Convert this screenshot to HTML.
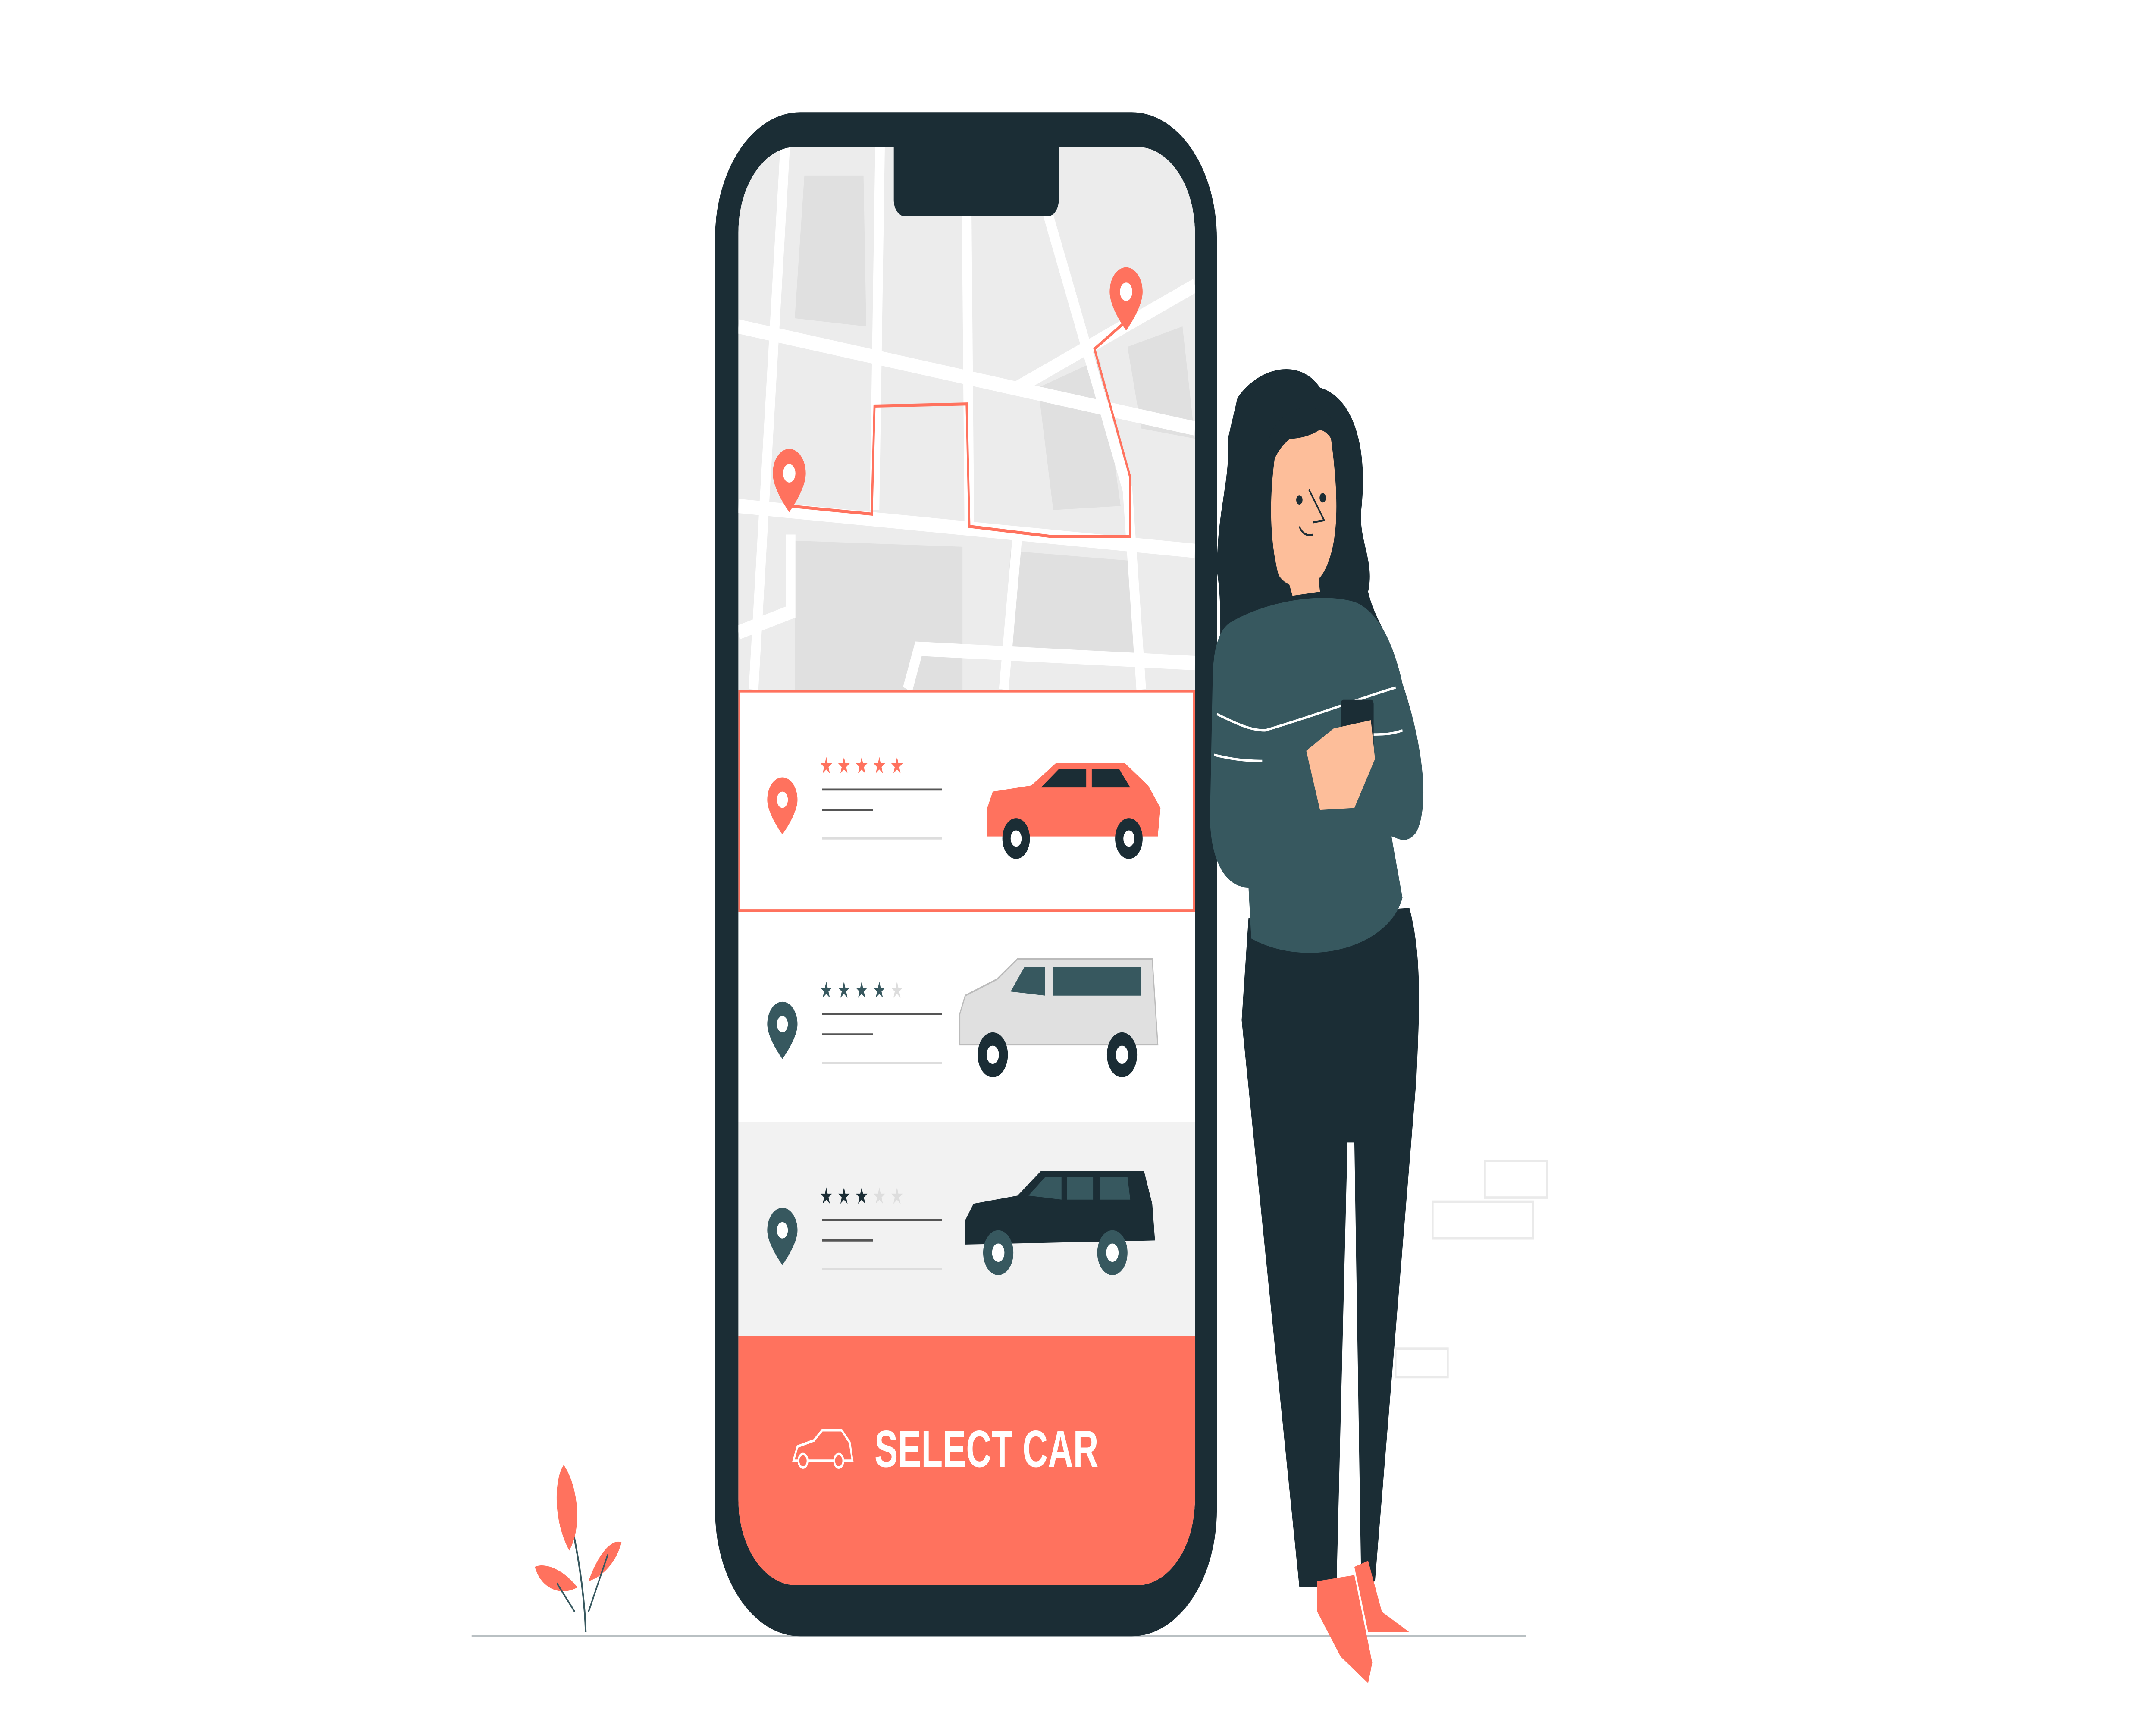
<!DOCTYPE html>
<html><head><meta charset="utf-8"><style>
html,body{margin:0;padding:0;background:#fff;width:100%;height:100%;overflow:hidden;}
svg{display:block;width:100vw;height:100vh;}
</style></head><body>
<svg viewBox="0 0 1568 845.5" preserveAspectRatio="none" xmlns="http://www.w3.org/2000/svg">
<rect width="1568" height="845.5" fill="#fff"/>
<line x1="343" y1="802" x2="1110" y2="802" stroke="#b9c0c3" stroke-width="1.2"/>
<g fill="none" stroke="#eaeaea" stroke-width="1.2">
<rect x="1080" y="569" width="45" height="18"/><rect x="1042" y="589" width="73" height="18"/><rect x="1015" y="661" width="38" height="14"/>
</g>
<g>
<path d="M426 800 C425 780 420 760 414 742" stroke="#37585f" stroke-width="1.2" fill="none"/>
<path d="M414 760 C402 745 403 725 410 718 C420 728 424 748 414 760Z" fill="#ff725e"/>
<path d="M420 778 C408 768 395 766 389 768 C393 778 407 783 420 778Z" fill="#ff725e"/>
<path d="M428 775 C436 760 446 754 452 756 C448 766 438 773 428 775Z" fill="#ff725e"/>
<path d="M418 790 L405 776 M428 790 L442 762" stroke="#37585f" stroke-width="1" fill="none"/>
</g>
<rect x="520" y="55" width="365" height="747" rx="62" fill="#1b2d35"/>
<rect x="537" y="72" width="332" height="705" rx="42" fill="#fff"/>
<clipPath id="scr"><rect x="537" y="72" width="332" height="705" rx="42"/></clipPath>
<g clip-path="url(#scr)">
<rect x="537" y="72" width="332" height="266" fill="#ececec"/>
<g fill="#e0e0e0">
<polygon points="585,86 628,86 630,160 578,156"/>
<polygon points="755,190 800,176 815,248 766,250"/>
<polygon points="820,170 860,160 869,215 830,210"/>
<polygon points="578,265 700,268 700,338 578,338"/>
<polygon points="735,270 825,275 828,320 730,318"/>
</g>
<g stroke="#fff" stroke-width="7" fill="none">
<path d="M537 248 L869 270"/>
<path d="M571 72 L548 338"/>
<path d="M537 160 L869 210"/>
<path d="M640 72 L636 250"/>
<path d="M703 100 L705 262"/>
<path d="M760 100 L820 240 L830 338"/>
<path d="M740 190 L869 140"/>
<path d="M575 262 L575 300 L537 310"/>
<path d="M740 262 L730 338"/>
<path d="M660 338 L668 318 L869 325"/>
</g>
<path d="M574 248 L634 252 L636 199 L703 198 L705 258 L765 263 L822 263 L822 234 L796 171 L818 158" stroke="#ff725e" stroke-width="1.5" fill="none"/>
<path d="M574 220 a12 12 0 0 1 12 12 c0 8 -12 19 -12 19 c0 0 -12 -11 -12 -19 a12 12 0 0 1 12 -12z" fill="#ff725e"/><circle cx="574" cy="232" r="4.5" fill="#fff"/>
<path d="M819 131 a12 12 0 0 1 12 12 c0 8 -12 19 -12 19 c0 0 -12 -11 -12 -19 a12 12 0 0 1 12 -12z" fill="#ff725e"/><circle cx="819" cy="143" r="4.5" fill="#fff"/>
<rect x="537" y="338" width="332" height="109" fill="#fff"/>
<rect x="537.7" y="338.7" width="330.6" height="107.6" fill="none" stroke="#ff725e" stroke-width="1.4"/>
<rect x="537" y="447" width="332" height="103" fill="#fff"/>
<rect x="537" y="550" width="332" height="105" fill="#f2f2f2"/>
<rect x="537" y="655" width="332" height="122" fill="#ff725e"/>
</g>
<path d="M650 72 H770 V98 a8 8 0 0 1 -8 8 H658 a8 8 0 0 1 -8 -8Z" fill="#1b2d35"/>
<g>
<path d="M569 381 a11 11 0 0 1 11 11 c0 7 -11 17 -11 17 c0 0 -11 -10 -11 -17 a11 11 0 0 1 11 -11z" fill="#ff725e"/><circle cx="569" cy="392" r="4" fill="#fff"/>
<path d="M569 491 a11 11 0 0 1 11 11 c0 7 -11 17 -11 17 c0 0 -11 -10 -11 -17 a11 11 0 0 1 11 -11z" fill="#37585f"/><circle cx="569" cy="502" r="4" fill="#fff"/>
<path d="M569 592 a11 11 0 0 1 11 11 c0 7 -11 17 -11 17 c0 0 -11 -10 -11 -17 a11 11 0 0 1 11 -11z" fill="#37585f"/><circle cx="569" cy="603" r="4" fill="#fff"/>
<g font-family="DejaVu Sans,sans-serif" font-size="11">
<text x="596" y="379" fill="#ff725e" letter-spacing="3">★★★★★</text>
<text x="596" y="489" fill="#37585f" letter-spacing="3">★★★★<tspan fill="#ddd">★</tspan></text>
<text x="596" y="590" fill="#1b2d35" letter-spacing="3">★★★<tspan fill="#ddd">★★</tspan></text>
</g>
<g stroke-width="1">
<line x1="598" y1="387" x2="685" y2="387" stroke="#555"/><line x1="598" y1="397" x2="635" y2="397" stroke="#555"/><line x1="598" y1="411" x2="685" y2="411" stroke="#ddd"/>
<line x1="598" y1="497" x2="685" y2="497" stroke="#555"/><line x1="598" y1="507" x2="635" y2="507" stroke="#555"/><line x1="598" y1="521" x2="685" y2="521" stroke="#ddd"/>
<line x1="598" y1="598" x2="685" y2="598" stroke="#555"/><line x1="598" y1="608" x2="635" y2="608" stroke="#555"/><line x1="598" y1="622" x2="685" y2="622" stroke="#ddd"/>
</g>
<path d="M718 396 L722 388 L750 385 L768 374 L818 374 L835 385 L844 396 L842 410 L718 410Z" fill="#ff725e"/>
<path d="M757 386 L770 377 L790 377 L790 386Z M794 377 L814 377 L822 386 L794 386Z" fill="#1b2d35"/>
<circle cx="739" cy="411" r="10" fill="#1b2d35"/><circle cx="739" cy="411" r="4" fill="#fff"/>
<circle cx="821" cy="411" r="10" fill="#1b2d35"/><circle cx="821" cy="411" r="4" fill="#fff"/>
<path d="M698 497 L702 488 L725 480 L740 470 L838 470 L842 512 L698 512Z" fill="#e0e0e0" stroke="#bbb" stroke-width="0.8"/>
<path d="M735 486 L745 474 L760 474 L760 488Z M766 474 L830 474 L830 488 L766 488Z" fill="#37585f"/>
<circle cx="722" cy="517" r="11" fill="#1b2d35"/><circle cx="722" cy="517" r="4.5" fill="#fff"/>
<circle cx="816" cy="517" r="11" fill="#1b2d35"/><circle cx="816" cy="517" r="4.5" fill="#fff"/>
<path d="M702 598 L708 590 L740 586 L757 574 L832 574 L838 590 L840 608 L702 610Z" fill="#1b2d35"/>
<path d="M748 586 L760 577 L772 577 L772 588Z M776 577 L795 577 L795 588 L776 588Z M800 577 L820 577 L822 588 L800 588Z" fill="#37585f"/>
<circle cx="726" cy="614" r="11" fill="#37585f"/><circle cx="726" cy="614" r="4.5" fill="#fff"/>
<circle cx="809" cy="614" r="11" fill="#37585f"/><circle cx="809" cy="614" r="4.5" fill="#fff"/>
</g>
<path d="M577 716 L580 709 L592 706 L598 701 L612 701 L618 707 L620 716Z" fill="none" stroke="#fff" stroke-width="1.3"/>
<circle cx="584" cy="716" r="3.3" fill="#ff725e" stroke="#fff" stroke-width="1.3"/><circle cx="610" cy="716" r="3.3" fill="#ff725e" stroke="#fff" stroke-width="1.3"/>
<text x="636" y="719" font-family="Liberation Sans,sans-serif" font-weight="bold" font-size="25.5" fill="#fff">SELECT CAR</text>
<g>
<path d="M900 195 C915 180 945 175 960 190 C985 195 995 220 990 250 C988 265 1000 275 995 290 C1000 305 1015 315 1015 330 L1000 345 L890 340 C885 320 890 300 885 280 C885 250 895 235 893 215 Z" fill="#1b2d35"/>
<path d="M908 450 L1025 445 C1035 470 1032 500 1030 530 L1000 775 L990 778 L985 560 L980 560 L972 778 L945 778 L903 500 Z" fill="#1b2d35"/>
<path d="M958 775 L985 772 L998 815 L995 825 L975 812 L958 790Z" fill="#ff725e"/>
<path d="M985 768 L995 765 L1005 790 L1025 800 L995 800 Z" fill="#ff725e"/>
<path d="M895 305 C920 295 960 290 985 295 C1005 300 1015 320 1020 335 C1035 365 1040 395 1030 408 C1022 415 1015 410 1012 410 L1020 440 C1010 465 950 475 910 460 L908 435 C890 435 880 420 880 400 L882 330 C883 315 888 308 895 305Z" fill="#37585f"/>
<path d="M885 350 C900 355 910 358 920 358 M920 358 C960 350 990 342 1015 337" stroke="#fff" stroke-width="1.2" fill="none"/>
<path d="M883 370 C895 372 905 373 918 373 M1020 358 C1012 360 1005 360 998 360" stroke="#fff" stroke-width="1.2" fill="none"/>
<path d="M927 225 C935 212 960 205 968 215 C973 240 975 265 963 280 C955 290 938 290 930 282 C925 270 922 250 927 225Z" fill="#fdbe9a"/>
<path d="M935 280 L940 292 L960 290 L958 278Z" fill="#fdbe9a"/>
<path d="M923 215 C930 200 955 195 968 205 C958 215 940 216 923 215Z" fill="#1b2d35"/>
<circle cx="945" cy="245" r="2.3" fill="#1b2d35"/><circle cx="962" cy="244" r="2.3" fill="#1b2d35"/>
<path d="M952 240 L963 255 L955 256 M945 258 C947 262 952 263 955 262" stroke="#1b2d35" stroke-width="1" fill="none"/>
<rect x="975" y="343" width="24" height="28" rx="2" fill="#1b2d35"/>
<path d="M950 368 L970 357 L997 353 L1000 372 L985 396 L960 397 Z" fill="#fdbe9a"/>
</g>
</svg>
</body></html>
